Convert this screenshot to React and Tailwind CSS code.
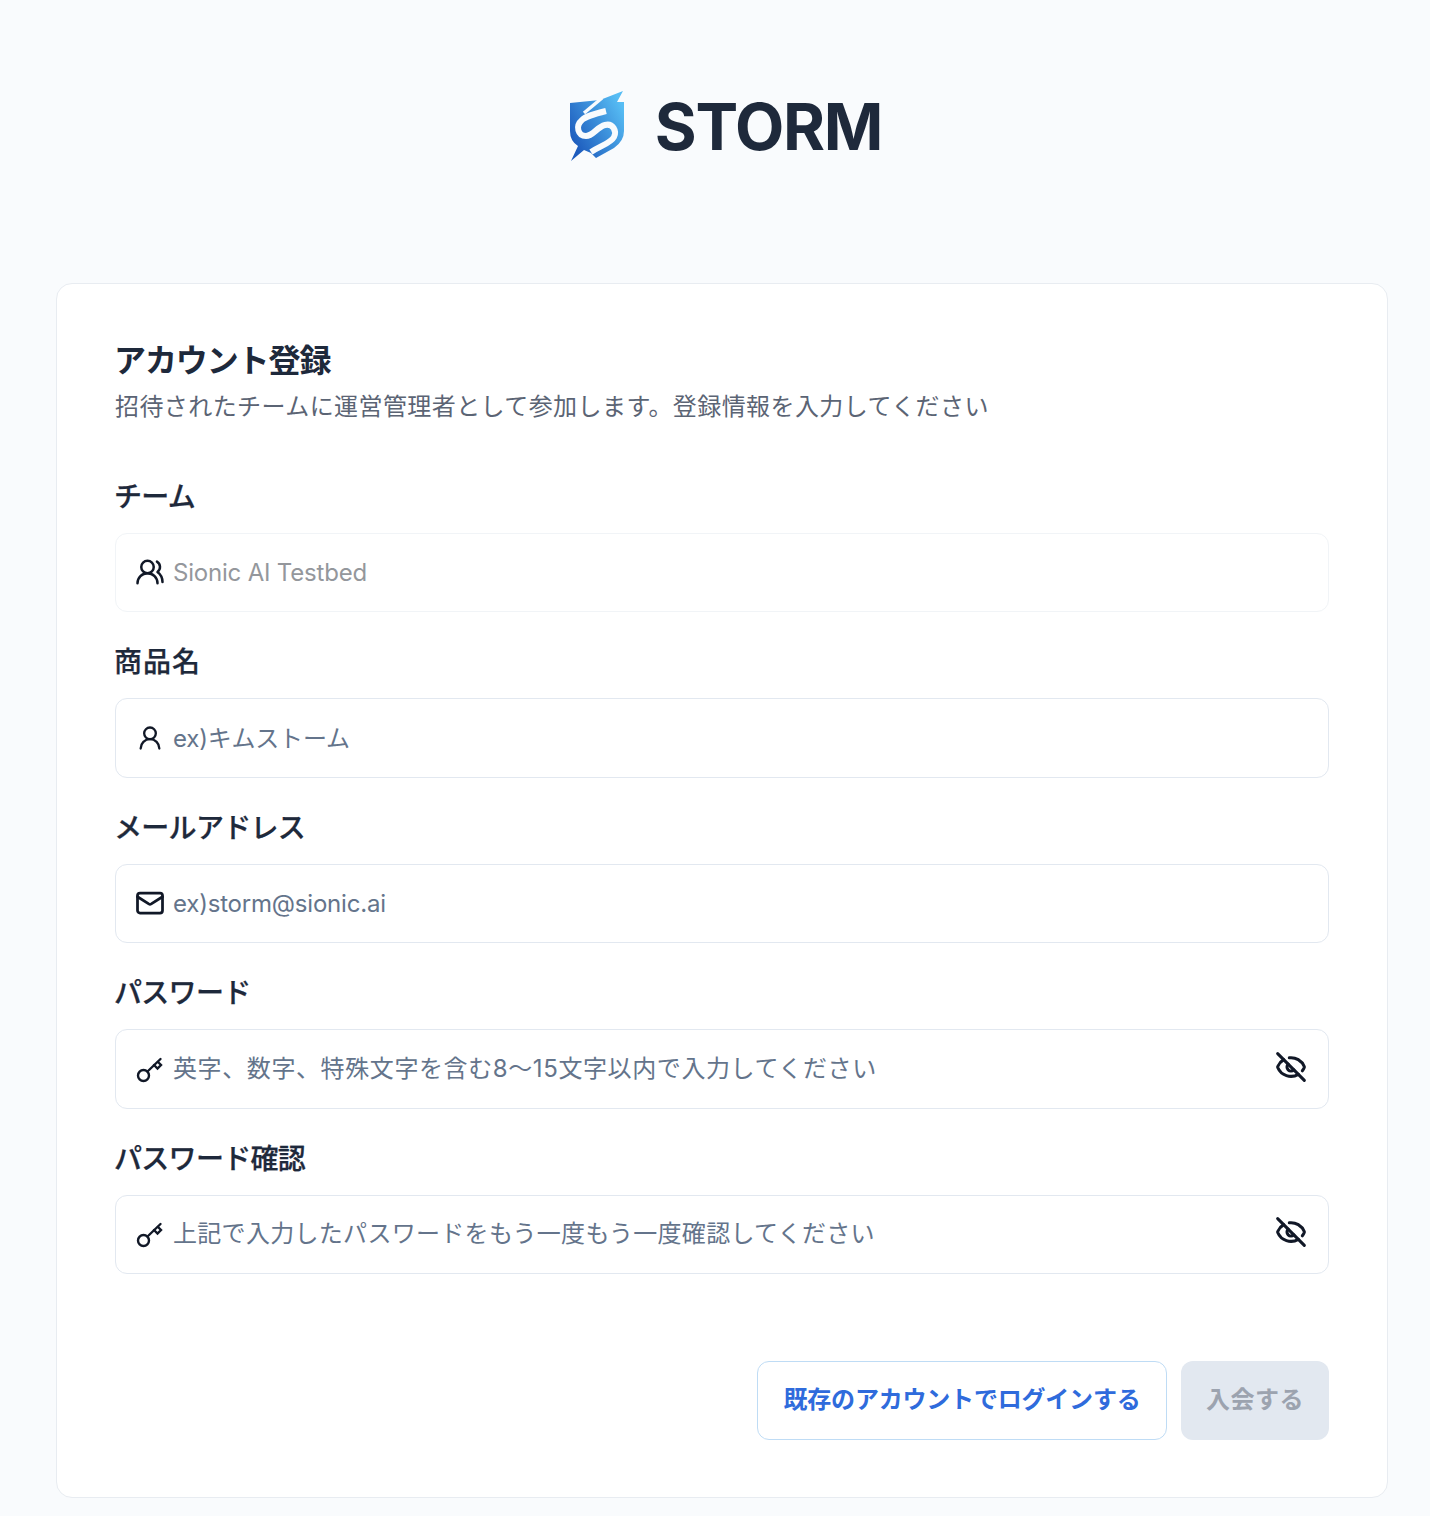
import { Mail, UserRound, UsersRound, EyeOff } from 'lucide-react';

const StormLogo = () => (
  <svg width="65" height="76" viewBox="0 0 65 76" className="shrink-0">
    <defs>
      <linearGradient id="stormFill" x1="6" y1="50" x2="60" y2="20" gradientUnits="userSpaceOnUse">
        <stop offset="0" stopColor="#1d5bbd" />
        <stop offset="1" stopColor="#57bdf4" />
      </linearGradient>
    </defs>
    <path
      d="M6 14 L36 11 L59 2 L53 13 L60 13 L60 42 Q60 52 50 59 L32 69 L27 64 L20 61 L7 72 L14 57 Q6 52 6 42 Z"
      fill="url(#stormFill)"
    />
    <path d="M38 9 L20 24" stroke="#f9fbfd" strokeWidth="3.5" fill="none" />
    <path
      d="M42 22 C30 25 22 27 18 31 C11 37 14 47 22 47 C29 47 33 38 41 36 C49 34 53 42 50 48 C47 54 38 56 27 63"
      stroke="#f9fbfd"
      strokeWidth="6"
      fill="none"
    />
  </svg>
);

const KeyIcon = () => (
  <svg width="28" height="28" viewBox="0 0 28 28" fill="none" stroke="#111827" strokeWidth="2.4" strokeLinecap="round">
    <circle cx="7.5" cy="20.5" r="5.5" />
    <path d="M11.5 16.5 L24.5 4" />
    <path d="M18 10 L21.5 13.5 L25 10 L22 7" />
  </svg>
);

const Field = ({ label, icon, value, disabled, eye, labelClass = 'tracking-[-0.7px]', valueClass = 'pt-0.5 tracking-[-0.2px]' }) => (
  <div>
    <label className={`-ml-px block text-[28px] leading-[38px] font-medium [-webkit-text-stroke:0.25px] text-[#1e293b] ${labelClass}`}>
      {label}
    </label>
    <div
      className={`mt-[17px] flex h-[79.5px] items-center rounded-xl border bg-white px-5 ${
        disabled ? 'border-[#f1f4f7]' : 'border-[#e2e8f0]'
      }`}
    >
      <span className="flex h-7 w-7 shrink-0 items-center justify-center text-[#111827]">{icon}</span>
      <span className={`ml-[9px] flex-1 text-2xl ${valueClass} ${disabled ? 'text-[#94979c]' : 'text-[#64748b]'}`}>
        {value}
      </span>
      {eye && <EyeOff className="-mt-1 -ml-px mr-px h-8 w-8 text-[#111827]" strokeWidth={2.3} />}
    </div>
  </div>
);

export default function App() {
  return (
    <div className="min-h-[1516px] bg-[#f9fbfd] px-[42px] pb-[18px] font-['Inter','Noto_Sans_CJK_JP',sans-serif]">
      <header className="flex h-[283px] items-center justify-center pb-[30px] pl-[16px]">
        <div className="flex items-center gap-[26px]">
          <StormLogo />
          <span className="text-[64px] leading-none font-bold tracking-[-1.2px] text-[#1e293b]">STORM</span>
        </div>
      </header>

      <main className="ml-[14px] w-[1332px] rounded-2xl border border-[#e8ecf1] bg-white px-[58px] pt-[57px] pb-[57px]">
        <h1 className="-ml-px text-[32px] leading-[40px] font-semibold tracking-[-1.1px] text-[#1e293b]">アカウント登録</h1>
        <p className="mt-[9px] text-2xl leading-[34px] tracking-[0.42px] text-[#5b6474]">
          招待されたチームに運営管理者として参加します。登録情報を入力してください
        </p>

        <div className="mt-[53.5px] flex flex-col gap-[31px]">
          <Field label="チーム" disabled icon={<UsersRound className="h-[30px] w-[30px] shrink-0" />} value="Sionic AI Testbed" />
          <Field label="商品名" labelClass="tracking-[1px]" icon={<UserRound className="h-7 w-7" />} value="ex)キムストーム" />
          <Field label="メールアドレス" icon={<Mail className="h-[30px] w-[30px] shrink-0" strokeWidth={2.2} />} value="ex)storm@sionic.ai" />
          <Field label="パスワード" eye icon={<KeyIcon />} valueClass="tracking-[0.6px]" value="英字、数字、特殊文字を含む8～15文字以内で入力してください" />
          <Field label="パスワード確認" eye icon={<KeyIcon />} valueClass="tracking-[0.3px]" value="上記で入力したパスワードをもう一度もう一度確認してください" />
        </div>

        <div className="mt-[87px] flex justify-end gap-[14px]">
          <button className="h-[79px] w-[410px] rounded-xl border border-[#bfdcf5] bg-white pb-0.5 text-2xl font-semibold tracking-[-0.2px] text-[#2f6bdc]">
            既存のアカウントでログインする
          </button>
          <button disabled className="h-[79px] w-[148px] rounded-xl bg-[#e2e8f0] pb-0.5 text-2xl font-semibold tracking-[0.5px] text-[#9ca3af]">
            入会する
          </button>
        </div>
      </main>
    </div>
  );
}
